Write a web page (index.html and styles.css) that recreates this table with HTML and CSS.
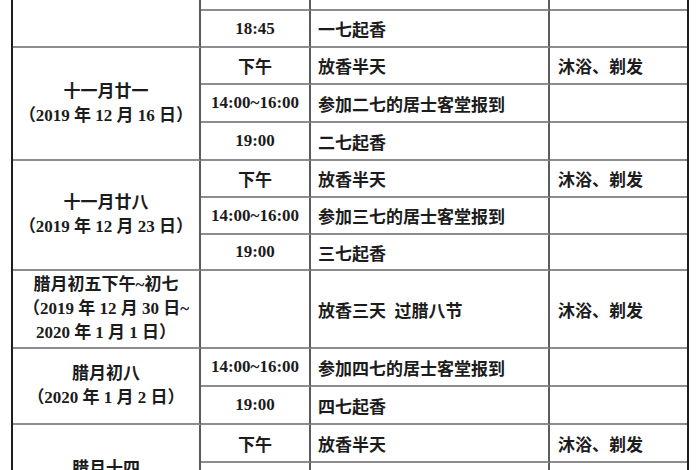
FILE: index.html
```html
<!DOCTYPE html>
<html lang="zh-CN">
<head>
<meta charset="utf-8">
<title>日程表</title>
<link rel="stylesheet" href="styles.css">
</head>
<body>
<div class="sheet">
  <div class="c date span2"></div>
  <div class="c time"></div>
  <div class="c act"></div>
  <div class="c note"></div>

  <div class="c time">18:45</div>
  <div class="c act">一七起香</div>
  <div class="c note"></div>

  <div class="c date span3"><span>十一月廿一</span><span>（2019 年 12 月 16 日）</span></div>
  <div class="c time">下午</div>
  <div class="c act">放香半天</div>
  <div class="c note">沐浴、剃发</div>
  <div class="c time">14:00~16:00</div>
  <div class="c act">参加二七的居士客堂报到</div>
  <div class="c note"></div>
  <div class="c time">19:00</div>
  <div class="c act">二七起香</div>
  <div class="c note"></div>

  <div class="c date span3"><span>十一月廿八</span><span>（2019 年 12 月 23 日）</span></div>
  <div class="c time">下午</div>
  <div class="c act">放香半天</div>
  <div class="c note">沐浴、剃发</div>
  <div class="c time">14:00~16:00</div>
  <div class="c act">参加三七的居士客堂报到</div>
  <div class="c note"></div>
  <div class="c time">19:00</div>
  <div class="c act">三七起香</div>
  <div class="c note"></div>

  <div class="c date"><span>腊月初五下午~初七</span><span>（2019 年 12 月 30 日~</span><span>2020 年 1 月 1 日）</span></div>
  <div class="c time"></div>
  <div class="c act">放香三天&nbsp;&nbsp;过腊八节</div>
  <div class="c note">沐浴、剃发</div>

  <div class="c date span2"><span>腊月初八</span><span>（2020 年 1 月 2 日）</span></div>
  <div class="c time">14:00~16:00</div>
  <div class="c act">参加四七的居士客堂报到</div>
  <div class="c note"></div>
  <div class="c time">19:00</div>
  <div class="c act">四七起香</div>
  <div class="c note"></div>

  <div class="c date span3"><span>腊月十四</span><span>（2020 年 1 月 8 日）</span></div>
  <div class="c time">下午</div>
  <div class="c act">放香半天</div>
  <div class="c note">沐浴、剃发</div>
  <div class="c time"></div>
  <div class="c act"></div>
  <div class="c note"></div>
  <div class="c time"></div>
  <div class="c act"></div>
  <div class="c note"></div>
</div>
</body>
</html>
```
FILE: styles.css
```css
html, body {
  margin: 0;
  padding: 0;
  background: #ffffff;
  overflow: hidden;
}
body {
  width: 700px;
  height: 470px;
}
.sheet {
  margin-left: 11px;
  width: 678px;
  box-sizing: border-box;
  border-left: 2px solid #1e1e1e;
  border-right: 2px solid #1e1e1e;
  display: grid;
  grid-template-columns: 188px 110px 239px 137px;
  grid-template-rows: 11px 37px 37px 38px 38px 37px 37px 36px 78px 38px 38px 38px 38px 38px;
  font-family: "Liberation Serif", "Noto Sans CJK SC", serif;
  font-weight: 700;
  font-size: 17px;
  color: #1c1c1c;
}
.c {
  box-sizing: border-box;
  border-bottom: 2px solid #8d8d8d;
  border-right: 2px solid #5c5c5c;
  display: flex;
  align-items: center;
  white-space: nowrap;
  overflow: hidden;
}
.note {
  border-right: none;
  padding-left: 8px;
}
.date {
  flex-direction: column;
  justify-content: center;
  line-height: 24px;
}
.span2 { grid-row: span 2; }
.span3 { grid-row: span 3; }
.time {
  justify-content: center;
}
.act {
  padding-left: 7px;
}
```
